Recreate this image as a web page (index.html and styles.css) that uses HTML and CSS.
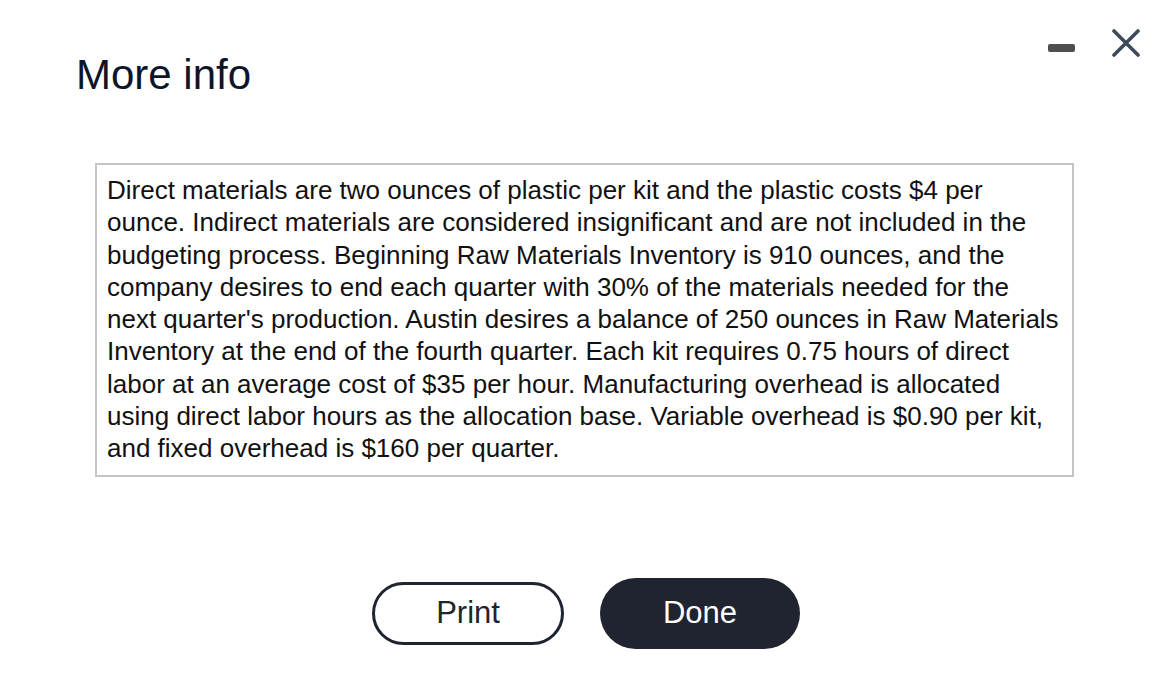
FILE: index.html
```html
<!DOCTYPE html>
<html>
<head>
<meta charset="utf-8">
<link rel="stylesheet" href="styles.css">
</head>
<body>
<div class="dialog">
  <div class="controls">
    <span class="minimize"></span>
    <svg class="close" width="28" height="28" viewBox="0 0 28 28"><path d="M2 2 L26 26 M26 2 L2 26" stroke="#3d4a5a" stroke-width="3.6" stroke-linecap="round"/></svg>
  </div>
  <h1 class="title">More info</h1>
  <div class="infobox">
    <p>Direct materials are two ounces of plastic per kit and the plastic costs $4 per ounce. Indirect materials are considered insignificant and are not included in the budgeting process. Beginning Raw Materials Inventory is 910 ounces, and the company desires to end each quarter with 30% of the materials needed for the next quarter's production. Austin desires a balance of 250 ounces in Raw Materials Inventory at the end of the fourth quarter. Each kit requires 0.75 hours of direct labor at an average cost of $35 per hour. Manufacturing overhead is allocated using direct labor hours as the allocation base. Variable overhead is $0.90 per kit, and fixed overhead is $160 per quarter.</p>
  </div>
  <div class="actions">
    <button class="btn btn-print">Print</button>
    <button class="btn btn-done">Done</button>
  </div>
</div>
</body>
</html>
```
FILE: styles.css
```css
html, body {
  margin: 0;
  padding: 0;
  background: #ffffff;
}
body {
  font-family: "Liberation Sans", Arial, sans-serif;
  width: 1158px;
  height: 682px;
  overflow: hidden;
}
.dialog {
  position: relative;
  padding: 0 84px 0 95px;
}
.controls {
  position: absolute;
  top: 29px;
  right: 18px;
  display: flex;
  align-items: flex-start;
  gap: 37px;
}
.minimize {
  display: block;
  width: 27px;
  height: 8px;
  margin-top: 15px;
  border-radius: 2px;
  background: #4f4f4f;
}
.close {
  display: block;
}
.title {
  margin: 0 0 0 -19px;
  padding-top: 51px;
  font-size: 42px;
  font-weight: normal;
  line-height: 48px;
  color: #0d1528;
}
.infobox {
  margin-top: 64px;
  border: 2px solid #c4c4c4;
  padding: 9px 10px 10px 10px;
}
.infobox p {
  margin: 0;
  font-size: 26px;
  line-height: 32.3px;
  color: #111111;
}
.actions {
  display: flex;
  justify-content: center;
  align-items: center;
  gap: 36px;
  margin-top: 101px;
  padding-left: 3px;
}
.btn {
  font-family: "Liberation Sans", Arial, sans-serif;
  font-size: 31px;
  border-radius: 40px;
  padding: 0;
  cursor: pointer;
}
.btn-print {
  width: 192px;
  height: 63px;
  background: #ffffff;
  border: 3px solid #1e2430;
  color: #1e2430;
}
.btn-done {
  width: 200px;
  height: 71px;
  background: #1f2430;
  border: none;
  color: #ffffff;
}
```
